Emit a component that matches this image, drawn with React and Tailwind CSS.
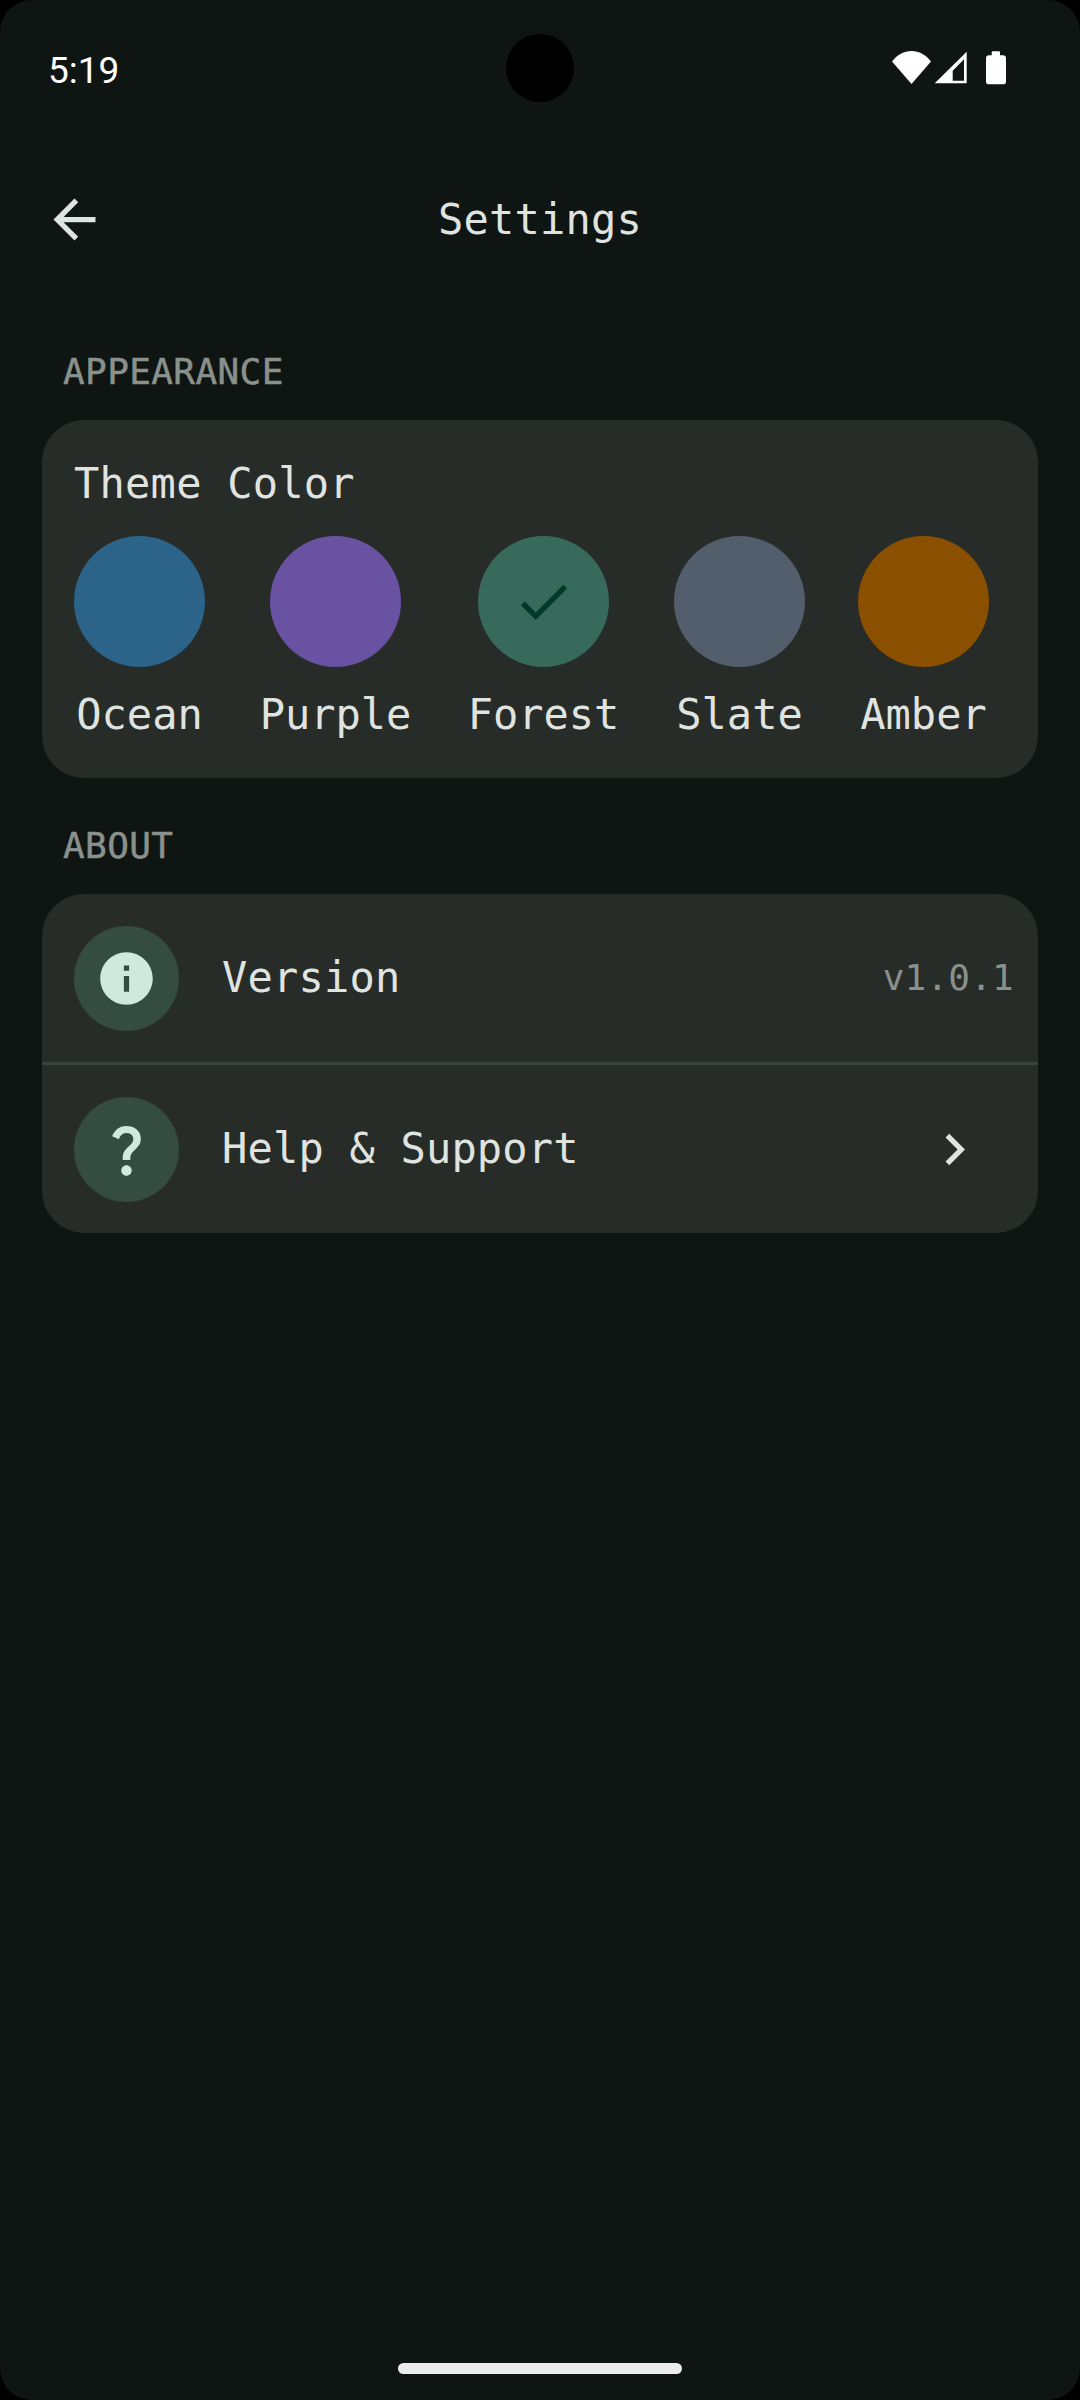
const mono = "font-['DejaVu_Sans_Mono','Liberation_Mono',monospace]";

function Mi({ d, size = 63, className = "" }) {
  return (
    <svg viewBox="0 0 24 24" width={size} height={size} className={className} fill="currentColor">
      <path d={d} />
    </svg>
  );
}

const swatches = [
  { name: "Ocean", bg: "bg-[#2c6388]", w: "w-[131px]" },
  { name: "Purple", bg: "bg-[#6a52a3]", w: "w-[151px] ml-[55px]" },
  { name: "Forest", bg: "bg-[#376a5b]", w: "w-[151px] ml-[57px]", on: true },
  { name: "Slate", bg: "bg-[#535e6d]", w: "w-[131px] ml-[55px]" },
  { name: "Amber", bg: "bg-[#8a5000]", w: "w-[131px] ml-[53px]" },
];

function Section({ children }) {
  return (
    <div className={`${mono} pl-[63px] text-[36px] leading-[44px] tracking-[0.4px] text-[#8a918c] [-webkit-text-stroke:0.5px_#8a918c]`}>{children}</div>
  );
}

function Row({ icon, label, children }) {
  return (
    <div className="flex h-[168px] items-center pl-[32px]">
      <div className="flex h-[105px] w-[105px] shrink-0 items-center justify-center rounded-full bg-[#344c42] text-[#cfe9dd]">
        {icon}
      </div>
      <div className={`${mono} ml-[43px] flex-1 text-[42px] leading-[52px] tracking-[0.2px] text-[#e0e4e0]`}>{label}</div>
      {children}
    </div>
  );
}

export default function App() {
  return (
    <div className="h-[2400px] w-[1080px] overflow-hidden bg-black">
      <div className="flex h-full flex-col rounded-[32px] bg-[#0f1513]">
        <div className="relative flex h-[136px] shrink-0 items-center justify-between pl-[48px] pr-[74px]">
          <span className="pt-[5px] font-['Roboto',sans-serif] text-[37px] leading-[44px] text-white">5:19</span>
          <div className="absolute left-[506px] top-[34px] h-[68px] w-[68px] rounded-full bg-black" />
          <svg width="114" height="34" viewBox="0 0 114 34" fill="#fff">
            <path d="M0 10.5 C5 4 12 0 19.5 0 S34 4 39 10.5 L19.5 33 Z" />
            <path fillRule="evenodd" d="M42.7 32.3 L74.7 0.7 V32.3 Z M60.7 29.7 H72 V8.3 L60.7 19.7 Z" />
            <path d="M99.7 4.3 V1.3 Q99.7 0.3 100.7 0.3 H107 Q108 0.3 108 1.3 V4.3 H111 Q114 4.3 114 7.3 V31 Q114 33.3 111.7 33.3 H96.3 Q94 33.3 94 31 V7.3 Q94 4.3 97 4.3 Z" />
          </svg>
        </div>

        <div className="relative flex h-[168px] shrink-0 items-center justify-center">
          <Mi
            className="absolute left-[43px] top-[52px] text-[#e0e4e0]"
            d="M20 11H7.83l5.59-5.59L12 4l-8 8 8 8 1.41-1.41L7.83 13H20v-2z"
          />
          <span className={`${mono} text-[42px] leading-[52px] tracking-[0.2px] text-[#e0e4e0]`}>Settings</span>
        </div>

        <div className="mt-[46px]">
          <Section>APPEARANCE</Section>
        </div>

        <div className="mx-[42px] mt-[26px] h-[358px] rounded-[42px] bg-[#272c29] pl-[32px] pt-[38px]">
          <div className={`${mono} text-[42px] leading-[52px] tracking-[0.25px] text-[#e0e4e0]`}>Theme Color</div>
          <div className="mt-[26px] flex">
            {swatches.map((s) => (
              <div key={s.name} className={`flex ${s.w} flex-col items-center`}>
                <div className={`flex h-[131px] w-[131px] items-center justify-center rounded-full ${s.bg}`}>
                  {s.on && (
                    <Mi
                      className="text-[#00382a]"
                      d="M9 16.17L4.83 12l-1.42 1.41L9 19 21 7l-1.41-1.41z"
                    />
                  )}
                </div>
                <div className={`${mono} mt-[22px] text-[42px] leading-[52px] text-[#e0e4e0]`}>{s.name}</div>
              </div>
            ))}
          </div>
        </div>

        <div className="mt-[46px]">
          <Section>ABOUT</Section>
        </div>

        <div className="mx-[42px] mt-[26px] rounded-[42px] bg-[#272c29]">
          <Row
            label="Version"
            icon={<Mi d="M12 2C6.48 2 2 6.48 2 12s4.48 10 10 10 10-4.48 10-10S17.52 2 12 2zm1 15h-2v-6h2v6zm0-8h-2V7h2v2z" />}
          >
            <span className={`${mono} pr-[24px] text-[36px] leading-[44px] tracking-[0.2px] text-[#8a918c]`}>v1.0.1</span>
          </Row>
          <div className="h-[3px] bg-[#3d433f]" />
          <Row
            label="Help & Support"
            icon={<Mi d="M11.07,12.85c0.77-1.39,2.25-2.21,3.11-3.44c0.91-1.29,0.4-3.7-2.18-3.7c-1.69,0-2.52,1.28-2.87,2.34L6.54,6.96 C7.25,4.83,9.18,3,11.99,3c2.35,0,3.96,1.07,4.78,2.41c0.7,1.15,1.11,3.3,0.03,4.9c-1.2,1.77-2.35,2.31-2.97,3.45 c-0.25,0.46-0.35,0.76-0.35,2.24h-2.89C10.58,15.22,10.46,13.95,11.07,12.85z M14,20c0,1.1-0.9,2-2,2s-2-0.9-2-2s0.9-2,2-2 S14,18.9,14,20z" />}
          >
            <Mi className="mr-[52px] text-[#e0e4e0]" d="M10 6L8.59 7.41 13.17 12l-4.58 4.59L10 18l6-6z" />
          </Row>
        </div>

        <div className="mt-auto flex justify-center pb-[26px]">
          <div className="h-[11px] w-[284px] rounded-full bg-[#ececec]" />
        </div>
      </div>
    </div>
  );
}
